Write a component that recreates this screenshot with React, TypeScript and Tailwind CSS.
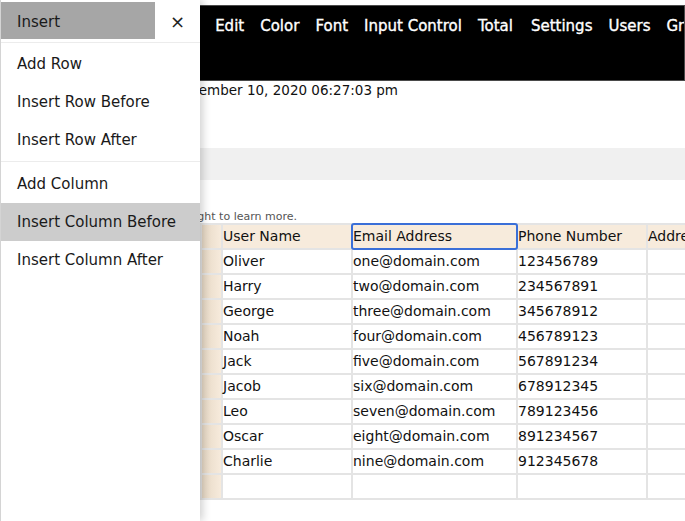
import { Fragment } from "react";

const nav = ["File", "Insert", "Edit", "Color", "Font", "Input Control", "Total", "Settings", "Users", "Groups", "Help"];

const users = [
  ["Oliver", "one@domain.com", "123456789"],
  ["Harry", "two@domain.com", "234567891"],
  ["George", "three@domain.com", "345678912"],
  ["Noah", "four@domain.com", "456789123"],
  ["Jack", "five@domain.com", "567891234"],
  ["Jacob", "six@domain.com", "678912345"],
  ["Leo", "seven@domain.com", "789123456"],
  ["Oscar", "eight@domain.com", "891234567"],
  ["Charlie", "nine@domain.com", "912345678"],
  ["", "", ""],
];

const groups = [
  ["Add Row", "Insert Row Before", "Insert Row After"],
  ["Add Column", "Insert Column Before", "Insert Column After"],
];

function Drawer() {
  return (
    <aside className="absolute left-0 top-0 h-full w-[200px] bg-white border-l border-[#d4d4d4] shadow-[3px_0_8px_rgba(0,0,0,0.18)] text-[15px] text-[#1a1a1a]">
      <div className="flex items-center h-[43px] pt-[2px] pb-[3px] border-b border-[#ececec]">
        <div className="w-[154px] h-full bg-[#a6a6a6] flex items-center pl-4 pt-[3px]">Insert</div>
        <button className="flex-1 flex justify-center text-[18px] text-[#222] pt-[1px]">×</button>
      </div>
      {groups.map((g, i) => (
        <ul key={i} className={`py-[2px] ${i > 0 ? "border-t border-[#ececec] pt-[3px]" : ""}`}>
          {g.map((item) => (
            <li
              key={item}
              className={`h-[38px] flex items-center pl-4 ${item === "Insert Column Before" ? "bg-[#cccccc]" : ""}`}
            >
              {item}
            </li>
          ))}
        </ul>
      ))}
    </aside>
  );
}

export default function App() {
  return (
    <div className="relative w-[685px] h-[521px] overflow-hidden bg-white font-['DejaVu_Sans',Verdana,sans-serif] text-[#111]">
      <main>
        <div className="pt-[5px]">
          <nav className="h-[76px] bg-black border border-[#4a4a4a] flex items-start gap-4 pl-[114px] pt-[9px] whitespace-nowrap overflow-hidden text-[15px] text-white [-webkit-text-stroke:0.35px_white]">
            {nav.map((n) => (
              <span key={n} className={n === "Settings" ? "ml-[2px]" : ""}>{n}</span>
            ))}
          </nav>
        </div>
        <div className="flex justify-end w-[398px] whitespace-nowrap text-[13.5px] -mt-[1px]">
          Last updated: September 10, 2020 06:27:03 pm
        </div>
        <div className="h-[32px] bg-[#f0f0f0] mt-[48px]" />
        <div className="flex justify-end w-[297px] whitespace-nowrap text-[11px] text-[#555] mt-[30px] leading-[13px]">
          Swipe a cell to the left or right to learn more.
        </div>
        <div className="ml-[200px]">
          <table className="border-collapse text-[14px] table-fixed w-[567px]">
            <colgroup>
              <col className="w-[21px]" />
              <col className="w-[130px]" />
              <col className="w-[165px]" />
              <col className="w-[130px]" />
              <col className="w-[121px]" />
            </colgroup>
            <thead>
              <tr className="h-[25px] bg-[#f7ebdc]">
                <th className="border-2 border-[#e4e4e4] bg-gradient-to-r from-[#e6d8c5] to-[#f7ebdc]" />
                {["User Name", "Email Address", "Phone Number", "Address"].map((h) => (
                  <th key={h} className="relative border-2 border-[#e4e4e4] font-normal text-left p-0 whitespace-nowrap">
                    {h}
                    {h === "Email Address" && (
                      <span className="absolute -inset-[2px] border-2 border-[#3a6fd8] rounded-[3px]" />
                    )}
                  </th>
                ))}
              </tr>
            </thead>
            <tbody>
              {users.map((u, i) => (
                <Fragment key={i}>
                  <tr className="h-[25px]">
                    <td className="border-2 border-[#e4e4e4] bg-gradient-to-r from-[#e6d8c5] to-[#f7ebdc]" />
                    {u.map((c, j) => (
                      <td key={j} className="border-2 border-[#e4e4e4] p-0 whitespace-nowrap">{c}</td>
                    ))}
                    <td className="border-2 border-[#e4e4e4]" />
                  </tr>
                </Fragment>
              ))}
            </tbody>
          </table>
        </div>
      </main>
      <Drawer />
    </div>
  );
}
